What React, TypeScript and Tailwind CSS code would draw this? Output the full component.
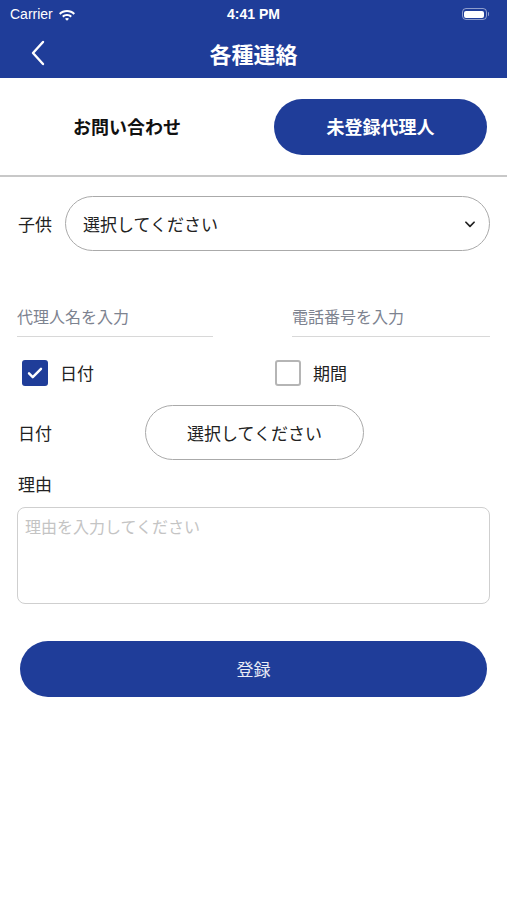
const FONT = { fontFamily: "'Noto Sans CJK JP', 'Noto Sans', sans-serif" };

const StatusBar = () => (
  <div className="relative h-[28px] flex items-center px-[10px] text-white">
    <div className="flex items-center gap-[5px] text-[14px]" style={{ fontFamily: "'Liberation Sans', sans-serif" }}>
      <span>Carrier</span>
      <svg width="18" height="13" viewBox="0 0 18 13" fill="white">
        <path d="M9 2C5.9 2 3.1 3.2 1 5.2l1.5 1.5C4.2 5 6.5 4 9 4s4.8 1 6.5 2.7L17 5.2C14.9 3.2 12.1 2 9 2z" />
        <path d="M9 6c-1.9 0-3.6.7-4.9 1.9l1.5 1.5C6.5 8.5 7.7 8 9 8s2.5.5 3.4 1.4l1.5-1.5C12.6 6.7 10.9 6 9 6z" />
        <path d="M9 10c-.8 0-1.5.3-2 .8L9 12.8l2-2c-.5-.5-1.2-.8-2-.8z" />
      </svg>
    </div>
    <span
      className="absolute left-1/2 -translate-x-1/2 text-[14px] font-bold"
      style={{ fontFamily: "'Liberation Sans', sans-serif" }}
    >
      4:41 PM
    </span>
    <div className="ml-auto mr-[8px] flex items-center">
      <div className="w-[25px] h-[12px] rounded-[4px] border border-white/50 p-[1.5px]">
        <div className="w-full h-full rounded-[2px] bg-white" />
      </div>
      <div className="w-[1.5px] h-[4px] bg-white/50 rounded-r-sm ml-[1px]" />
    </div>
  </div>
);

const Checkbox = ({ checked, label }: { checked: boolean; label: string }) => (
  <div className="flex items-center gap-[12px]">
    {checked ? (
      <div className="w-[26px] h-[26px] rounded-[3px] bg-[#1f3d99] flex items-center justify-center">
        <svg width="18" height="18" viewBox="0 0 24 24" fill="none" stroke="white" strokeWidth="3.2" strokeLinecap="round" strokeLinejoin="round">
          <path d="M4 12.5l5 5L20 6.5" />
        </svg>
      </div>
    ) : (
      <div className="w-[26px] h-[26px] rounded-[3px] border-2 border-[#b5b5b5] bg-white" />
    )}
    <span className="text-[17px] text-[#222]">{label}</span>
  </div>
);

export default function App() {
  return (
    <div className="w-[507px] h-[900px] bg-white" style={FONT}>
      <div className="bg-[#1f3d99]">
        <StatusBar />
        <div className="relative h-[50px] flex items-center justify-center">
          <svg className="absolute left-[30px] top-[12px]" width="16" height="26" viewBox="0 0 16 26" fill="none" stroke="white" strokeWidth="2.4" strokeLinecap="round" strokeLinejoin="round">
            <path d="M13 2L3 13l10 11" />
          </svg>
          <span className="text-white text-[22px] font-bold">各種連絡</span>
        </div>
      </div>

      <div className="h-[99px] flex items-center border-b-2 border-[#c8c8c8]">
        <div className="w-[254px] flex justify-center">
          <span className="text-[18px] font-bold text-[#111]">お問い合わせ</span>
        </div>
        <button className="ml-[20px] w-[213px] h-[56px] rounded-full bg-[#1f3d99] text-white text-[18px] font-bold">
          未登録代理人
        </button>
      </div>

      <div className="px-[17px]">
        <div className="mt-[19px] flex items-center gap-[13px]">
          <span className="text-[17px] text-[#222] pl-[1px]">子供</span>
          <div className="flex-1 h-[55px] rounded-full border border-[#aaa] flex items-center pl-[17px] pr-[12px]">
            <span className="text-[17px] text-[#222]">選択してください</span>
            <svg className="ml-auto" width="14" height="14" viewBox="0 0 24 24" fill="none" stroke="#222" strokeWidth="3" strokeLinecap="round" strokeLinejoin="round">
              <path d="M5 9l7 7 7-7" />
            </svg>
          </div>
        </div>

        <div className="mt-[45px] flex justify-between">
          <div className="w-[196px] h-[41px] border-b border-[#d8d8d8] flex items-center">
            <span className="text-[16px] text-[#7d8390]">代理人名を入力</span>
          </div>
          <div className="w-[198px] h-[41px] border-b border-[#d8d8d8] flex items-center">
            <span className="text-[16px] text-[#7d8390]">電話番号を入力</span>
          </div>
        </div>

        <div className="mt-[23px] flex items-center pl-[5px]">
          <div className="w-[253px]">
            <Checkbox checked label="日付" />
          </div>
          <Checkbox checked={false} label="期間" />
        </div>

        <div className="mt-[19px] flex items-center">
          <span className="w-[128px] text-[17px] text-[#222] pl-[1px]">日付</span>
          <div className="w-[219px] h-[55px] rounded-full border border-[#aaa] flex items-center justify-center">
            <span className="text-[17px] text-[#222]">選択してください</span>
          </div>
        </div>

        <div className="mt-[12px] text-[17px] leading-[24px] text-[#222] pl-[1px]">理由</div>

        <div className="mt-[11px] h-[97px] rounded-[8px] border border-[#cfcfcf] px-[7px] py-[6px]">
          <span className="text-[16px] text-[#c4c4c4]">理由を入力してください</span>
        </div>

        <button className="mt-[37px] ml-[3px] w-[467px] h-[56px] rounded-full bg-[#1f3d99] text-white/90 text-[17px]">
          登録
        </button>
      </div>
    </div>
  );
}
